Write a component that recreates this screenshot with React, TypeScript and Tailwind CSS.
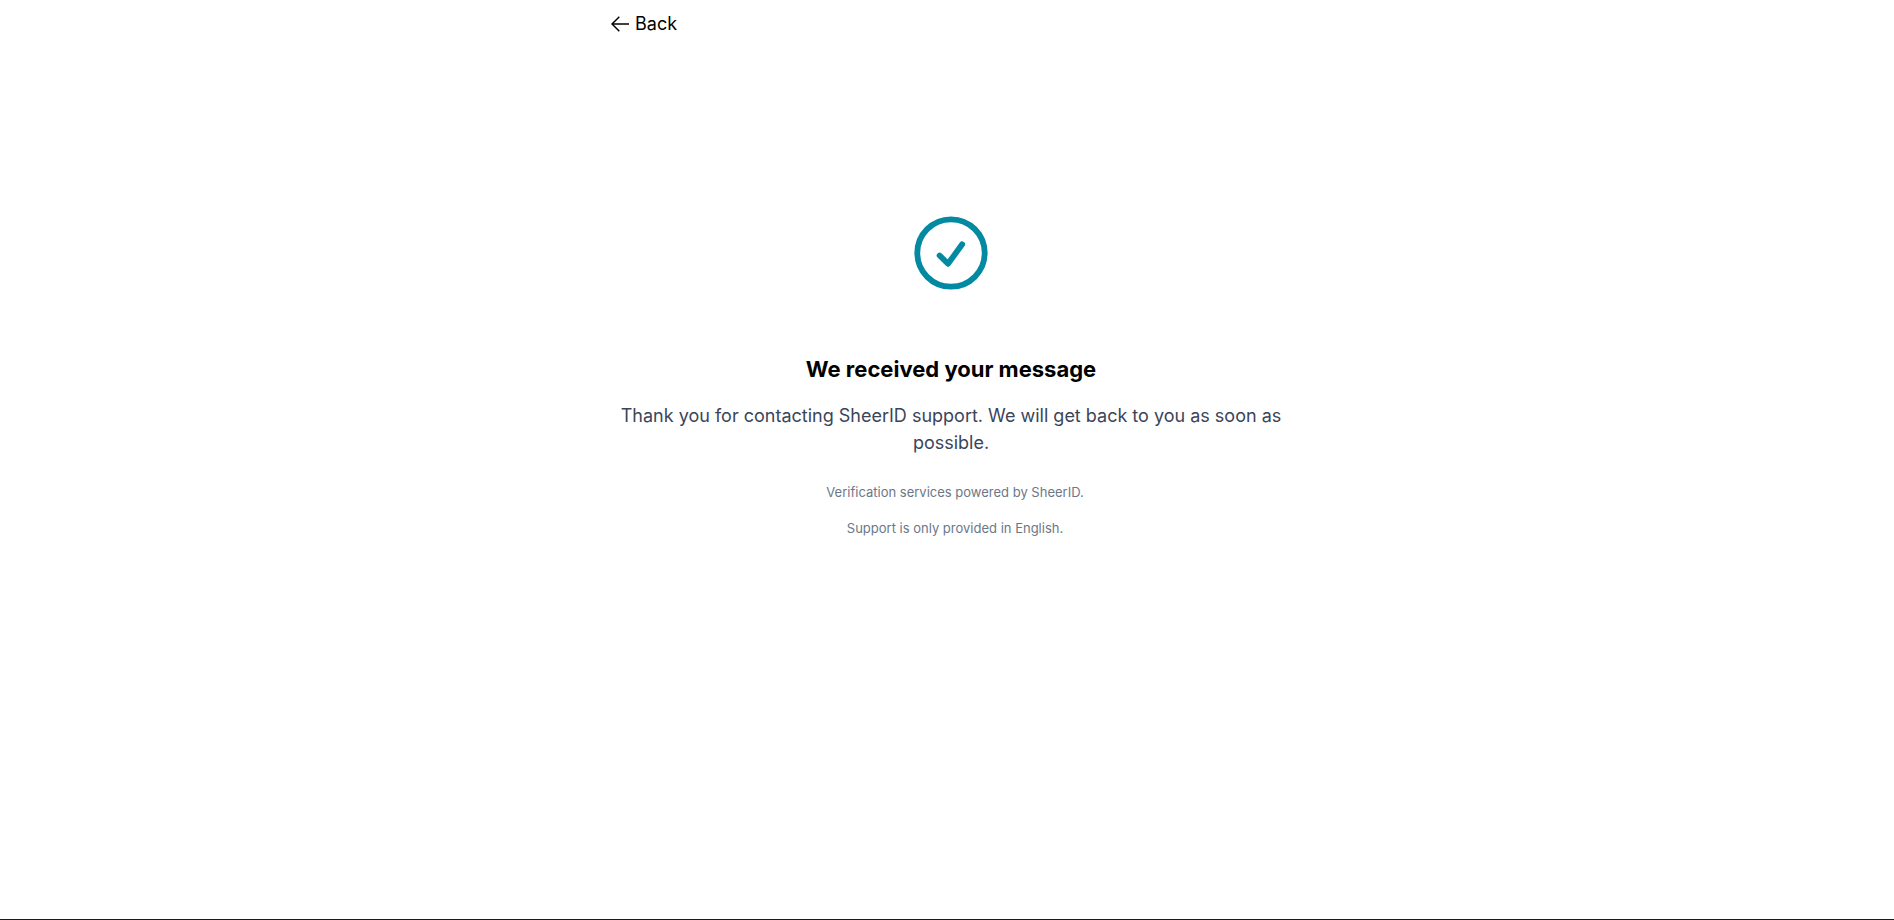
const footerNotes = [
  'Verification services powered by SheerID.',
  'Support is only provided in English.',
];

function BackLink() {
  return (
    <a href="#back" className="inline-flex items-center gap-1.5 text-lg leading-6 text-black">
      <svg
        className="h-4 w-[18px]"
        viewBox="0 0 18 16"
        fill="none"
        stroke="currentColor"
        strokeWidth="1.5"
        aria-hidden="true"
      >
        <path d="M18 8H1" />
        <path d="M8.3 0.7L1 8L8.3 15.3" />
      </svg>
      Back
    </a>
  );
}

function SuccessIcon() {
  return (
    <svg
      className="mx-auto size-[74px] text-[#0489a3]"
      viewBox="0 0 74 74"
      fill="none"
      stroke="currentColor"
      strokeWidth="5.8"
      aria-hidden="true"
    >
      <circle cx="37" cy="37" r="33.7" />
      <path d="M25.6 39.5L34 47.8L48.2 28.3" strokeLinecap="round" strokeLinejoin="round" />
    </svg>
  );
}

export default function App() {
  return (
    <div className="min-h-screen border-b border-[#1a1a1a] bg-white pl-2 font-['Inter',sans-serif]">
      <div className="mx-auto max-w-[680px]">
        <header className="flex pt-3">
          <BackLink />
        </header>

        <main className="pt-[180px] text-center">
          <SuccessIcon />
          <h1 className="mt-16 text-[22px] leading-[30px] font-bold text-black">
            We received your message
          </h1>
          <p className="mt-[18px] text-lg leading-[27px] text-[#3b455a]">
            Thank you for contacting SheerID support. We will get back to you as soon as possible.
          </p>
        </main>

        <footer className="mt-[26px] flex flex-col gap-4 pl-2 text-center text-[13px] leading-5 text-[#6b7788]">
          {footerNotes.map((note) => (
            <p key={note}>{note}</p>
          ))}
        </footer>
      </div>
    </div>
  );
}
